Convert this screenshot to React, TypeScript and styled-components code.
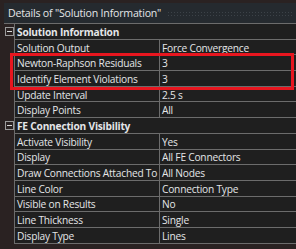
import styled, { createGlobalStyle } from "styled-components";

const GlobalStyle = createGlobalStyle`
  html, body {
    margin: 0;
    padding: 0;
    background: #2a2222;
  }
  body {
    font-family: "Open Sans", "Liberation Sans", sans-serif;
    color: #e4e6e8;
  }
`;

type Row =
  | { kind: "group"; label: string }
  | { kind: "prop"; label: string; value: string; marked?: boolean };

const rows: Row[] = [
  { kind: "group", label: "Solution Information" },
  { kind: "prop", label: "Solution Output", value: "Force Convergence" },
  { kind: "prop", label: "Newton-Raphson Residuals", value: "3", marked: true },
  { kind: "prop", label: "Identify Element Violations", value: "3", marked: true },
  { kind: "prop", label: "Update Interval", value: "2.5 s" },
  { kind: "prop", label: "Display Points", value: "All" },
  { kind: "group", label: "FE Connection Visibility" },
  { kind: "prop", label: "Activate Visibility", value: "Yes" },
  { kind: "prop", label: "Display", value: "All FE Connectors" },
  { kind: "prop", label: "Draw Connections Attached To", value: "All Nodes" },
  { kind: "prop", label: "Line Color", value: "Connection Type" },
  { kind: "prop", label: "Visible on Results", value: "No" },
  { kind: "prop", label: "Line Thickness", value: "Single" },
  { kind: "prop", label: "Display Type", value: "Lines" },
];

const Panel = styled.div`
  width: 292px;
  margin: 3px 0 0 4px;
  height: 246px;
  overflow: hidden;
`;

const TitleBar = styled.div`
  height: 20px;
  display: flex;
  align-items: center;
  gap: 6px;
  padding-left: 4px;
  background: #252a2f;
  border-bottom: 1px solid #6c6c6c;
  font-size: 10.6px;
  letter-spacing: -0.2px;
  white-space: nowrap;
`;

const Grip = styled.div`
  flex: 1;
  height: 5px;
  margin-right: 4px;
  background-image: radial-gradient(circle, #3c4248 0.8px, transparent 1px);
  background-size: 3px 3px;
`;

const Grid = styled.div`
  display: flex;
  flex-direction: column;
`;

const Highlight = styled.div`
  position: relative;
  &::after {
    content: "";
    position: absolute;
    left: 6px;
    right: 2px;
    top: -2px;
    bottom: -3px;
    border: 3px solid #e8161f;
    pointer-events: none;
  }
`;

const RowLine = styled.div<{ $group?: boolean }>`
  height: 15.7px;
  box-sizing: border-box;
  display: grid;
  grid-template-columns: 11px ${(p) => (p.$group ? "1fr" : "145px 1fr")};
  font-size: 10.2px;
  letter-spacing: -0.22px;
  font-weight: ${(p) => (p.$group ? 700 : 400)};
  white-space: nowrap;
`;

const Gutter = styled.div`
  display: flex;
  align-items: center;
  padding-left: 1px;
  border-right: 1px solid #6c6c6c;
`;

const Cell = styled.div<{ $divider?: boolean }>`
  display: flex;
  align-items: center;
  padding: 1px 0 0 2px;
  overflow: hidden;
  background: #1f1f1f;
  border-bottom: 1px solid #6c6c6c;
  border-right: ${(p) => (p.$divider ? "1px solid #6c6c6c" : "none")};
`;

const Toggle = styled.div`
  width: 7px;
  height: 7px;
  border: 1px solid #9a9a9a;
  display: flex;
  align-items: center;
  justify-content: center;
  &::before {
    content: "";
    width: 5px;
    height: 1px;
    background: #d8d8d8;
  }
`;

const renderRow = (row: Row) =>
  row.kind === "group" ? (
    <RowLine $group key={row.label}>
      <Gutter>
        <Toggle />
      </Gutter>
      <Cell>{row.label}</Cell>
    </RowLine>
  ) : (
    <RowLine key={row.label}>
      <Gutter />
      <Cell $divider>{row.label}</Cell>
      <Cell>{row.value}</Cell>
    </RowLine>
  );

export default function App() {
  const before = rows.slice(0, 2);
  const marked = rows.filter((r) => r.kind === "prop" && r.marked);
  const after = rows.slice(4);

  return (
    <>
      <GlobalStyle />
      <Panel>
        <TitleBar>
          <span>Details of "Solution Information"</span>
          <Grip />
        </TitleBar>
        <Grid>
          {before.map(renderRow)}
          <Highlight>{marked.map(renderRow)}</Highlight>
          {after.map(renderRow)}
        </Grid>
      </Panel>
    </>
  );
}
